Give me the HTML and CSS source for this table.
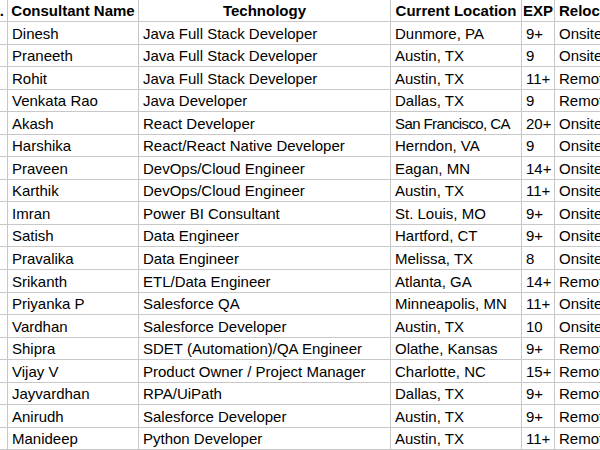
FILE: index.html
```html
<!DOCTYPE html>
<html>
<head>
<meta charset="utf-8">
<link rel="stylesheet" href="styles.css">
</head>
<body>
<div class="sheet">
  <div class="cell head num"><span class="clip"><span>S.No.</span></span></div>
  <div class="cell head center">Consultant Name</div>
  <div class="cell head center">Technology</div>
  <div class="cell head center">Current Location</div>
  <div class="cell head center">EXP</div>
  <div class="cell head last">Relocation</div>

  <div class="cell num"></div><div class="cell">Dinesh</div><div class="cell">Java Full Stack Developer</div><div class="cell">Dunmore, PA</div><div class="cell">9+</div><div class="cell last">Onsite</div>
  <div class="cell num"></div><div class="cell">Praneeth</div><div class="cell">Java Full Stack Developer</div><div class="cell">Austin, TX</div><div class="cell">9</div><div class="cell last">Onsite</div>
  <div class="cell num"></div><div class="cell">Rohit</div><div class="cell">Java Full Stack Developer</div><div class="cell">Austin, TX</div><div class="cell">11+</div><div class="cell last">Remote</div>
  <div class="cell num"></div><div class="cell">Venkata Rao</div><div class="cell">Java Developer</div><div class="cell">Dallas, TX</div><div class="cell">9</div><div class="cell last">Remote</div>
  <div class="cell num"></div><div class="cell">Akash</div><div class="cell">React Developer</div><div class="cell tight">San Francisco, CA</div><div class="cell">20+</div><div class="cell last">Onsite</div>
  <div class="cell num"></div><div class="cell">Harshika</div><div class="cell">React/React Native Developer</div><div class="cell">Herndon, VA</div><div class="cell">9</div><div class="cell last">Onsite</div>
  <div class="cell num"></div><div class="cell">Praveen</div><div class="cell">DevOps/Cloud Engineer</div><div class="cell">Eagan, MN</div><div class="cell">14+</div><div class="cell last">Onsite</div>
  <div class="cell num"></div><div class="cell">Karthik</div><div class="cell">DevOps/Cloud Engineer</div><div class="cell">Austin, TX</div><div class="cell">11+</div><div class="cell last">Onsite</div>
  <div class="cell num"></div><div class="cell">Imran</div><div class="cell">Power BI Consultant</div><div class="cell">St. Louis, MO</div><div class="cell">9+</div><div class="cell last">Onsite</div>
  <div class="cell num"></div><div class="cell">Satish</div><div class="cell">Data Engineer</div><div class="cell">Hartford, CT</div><div class="cell">9+</div><div class="cell last">Onsite</div>
  <div class="cell num"></div><div class="cell">Pravalika</div><div class="cell">Data Engineer</div><div class="cell">Melissa, TX</div><div class="cell">8</div><div class="cell last">Onsite</div>
  <div class="cell num"></div><div class="cell">Srikanth</div><div class="cell">ETL/Data Engineer</div><div class="cell">Atlanta, GA</div><div class="cell">14+</div><div class="cell last">Remote</div>
  <div class="cell num"></div><div class="cell">Priyanka P</div><div class="cell">Salesforce QA</div><div class="cell">Minneapolis, MN</div><div class="cell">11+</div><div class="cell last">Onsite</div>
  <div class="cell num"></div><div class="cell">Vardhan</div><div class="cell">Salesforce Developer</div><div class="cell">Austin, TX</div><div class="cell">10</div><div class="cell last">Onsite</div>
  <div class="cell num"></div><div class="cell">Shipra</div><div class="cell">SDET (Automation)/QA Engineer</div><div class="cell">Olathe, Kansas</div><div class="cell">9+</div><div class="cell last">Remote</div>
  <div class="cell num"></div><div class="cell">Vijay V</div><div class="cell">Product Owner / Project Manager</div><div class="cell">Charlotte, NC</div><div class="cell">15+</div><div class="cell last">Remote</div>
  <div class="cell num"></div><div class="cell">Jayvardhan</div><div class="cell">RPA/UiPath</div><div class="cell">Dallas, TX</div><div class="cell">9+</div><div class="cell last">Remote</div>
  <div class="cell num"></div><div class="cell">Anirudh</div><div class="cell">Salesforce Developer</div><div class="cell">Austin, TX</div><div class="cell">9+</div><div class="cell last">Remote</div>
  <div class="cell num"></div><div class="cell">Manideep</div><div class="cell">Python Developer</div><div class="cell">Austin, TX</div><div class="cell">11+</div><div class="cell last">Remote</div>
</div>
</body>
</html>
```
FILE: styles.css
```css
html, body {
  margin: 0;
  padding: 0;
  background: #ffffff;
  overflow: hidden;
}
.sheet {
  display: grid;
  grid-template-columns: 8px 131px 252px 131px 33px 1fr;
  grid-template-rows: 22px;
  grid-auto-rows: 22.56px;
  width: 600px;
  font-family: "Liberation Sans", Arial, sans-serif;
  font-size: 15px;
  color: #000;
}
.cell {
  box-sizing: border-box;
  border-right: 1px solid #c8c8c8;
  border-bottom: 1px solid #c8c8c8;
  padding: 0 0 2px 4px;
  display: flex;
  align-items: flex-end;
  white-space: nowrap;
  overflow: hidden;
}
.cell.last {
  border-right: none;
}
.head {
  font-weight: bold;
}
.center {
  justify-content: center;
  padding-left: 0;
}
.num {
  padding-left: 0;
  justify-content: flex-start;
}
.clip {
  display: flex;
  justify-content: flex-end;
  width: 4px;
  overflow: hidden;
}
.tight {
  letter-spacing: -0.6px;
}
```
